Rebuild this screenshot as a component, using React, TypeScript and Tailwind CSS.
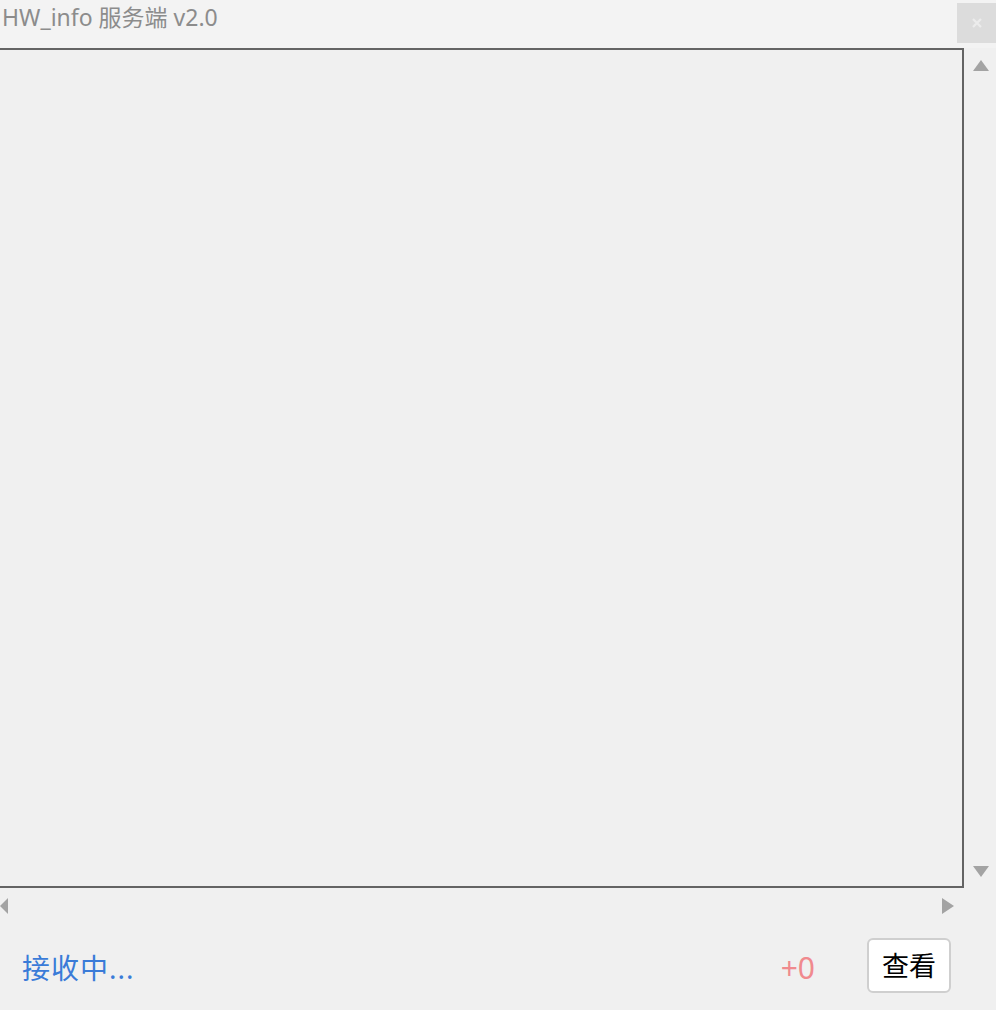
import React from "react";

export default function App() {
  const font = { fontFamily: '"Noto Sans", "Noto Sans CJK SC", sans-serif' };
  return (
    <div className="w-[996px] h-[1010px] bg-[#f0f0f0] flex flex-col overflow-hidden" style={font}>
      <div className="h-[48px] bg-[#f3f3f3] flex items-start justify-between">
        <div className="pl-[2px] pt-[2px] text-[23px] leading-[30px] text-[#8c8c8c]">HW_info 服务端 v2.0</div>
        <div className="mt-[3px] w-[39px] h-[40px] bg-[#dcdcdc] flex items-center justify-center">
          <svg width="12" height="12" viewBox="0 0 12 12">
            <path d="M2 2 L10 10 M10 2 L2 10" stroke="#ececec" strokeWidth="2.2" />
          </svg>
        </div>
      </div>
      <div className="h-[840px] flex">
        <div className="w-[964px] h-full border-2 border-l-0 border-[#646464] bg-[#f0f0f0]" />
        <div className="flex-1 flex flex-col items-center justify-between pt-[12px] pb-[11px] pl-[2px]">
          <svg width="16" height="11" viewBox="0 0 16 11">
            <path d="M8 0 L16 11 L0 11 Z" fill="#a3a3a3" />
          </svg>
          <svg width="16" height="11" viewBox="0 0 16 11">
            <path d="M0 0 L16 0 L8 11 Z" fill="#a3a3a3" />
          </svg>
        </div>
      </div>
      <div className="h-[36px] flex items-center justify-between pr-[42px]">
        <svg width="8" height="16" viewBox="0 0 8 16">
          <path d="M8 0 L8 16 L0 8 Z" fill="#a3a3a3" />
        </svg>
        <svg width="12" height="16" viewBox="0 0 12 16">
          <path d="M0 0 L12 8 L0 16 Z" fill="#a3a3a3" />
        </svg>
      </div>
      <div className="flex-1 flex items-center pl-[22px] pr-[45px]">
        <div className="text-[28px] leading-none text-[#3a7bd8] mt-[1px] tracking-[1px]">接收中...</div>
        <div className="ml-auto text-[30px] leading-none text-[#f08a8e] mt-[1px]">+0</div>
        <button className="ml-[52px] w-[84px] h-[55px] bg-white border-2 border-[#cfcfcf] rounded-[6px] text-[27px] leading-none text-black flex items-center justify-center mt-[-3px]">
          查看
        </button>
      </div>
    </div>
  );
}
